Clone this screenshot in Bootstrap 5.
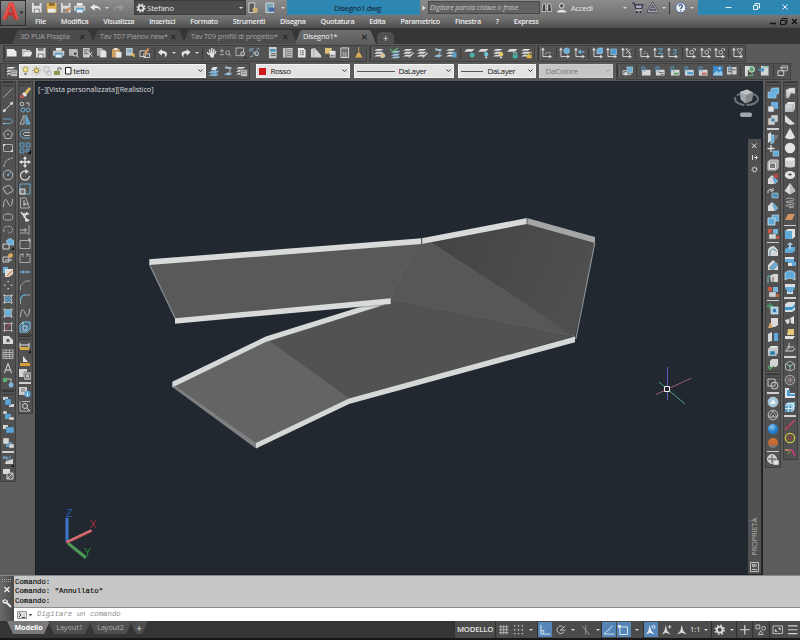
<!DOCTYPE html>
<html lang="it">
<head>
    <meta charset="UTF-8">
    <meta name="viewport" content="width=device-width, initial-scale=1.0">
    <title>Disegno1.dwg</title>
    <link rel="stylesheet" href="https://cdn.jsdelivr.net/npm/bootstrap@5.3.0/dist/css/bootstrap.min.css">
    <style>
        body { width: 800px; height: 640px; overflow: hidden; background: #5c5c5c; color: #e4e4e4; font: 7.5px/1 "Open Sans", "Noto Sans", sans-serif; }
        svg { display: block; flex: none; }
        .cell { width: 14.35px; height: 14px; display: flex; align-items: center; justify-content: center; flex: none; }
        .cell svg, .gear-ico { width: 11.5px; height: 11.5px; fill: none; stroke: #d9d9d9; }
        .cell svg { opacity: .93; }
        .gear-ico { width: 10px; height: 10px; margin: 0 1px; }
        .arr { width: 8px; flex: none; display: flex; justify-content: center; }
        .arr::after { content: ""; border: 2px solid transparent; border-top: 2.6px solid #d8d8d8; border-bottom: 0; }
        .arr.off::after { border-top-color: #888; }

        /* title bar */
        .app-logo { width: 26px; height: 26px; background: linear-gradient(#8b8b8b, #585858); border: 1px solid #2e2e2e; }
        .title-row { height: 15px; background: linear-gradient(#8c8c8c, #747474); }
        .ws-box { width: 112px; height: 15px; background: #4b4b4b; border: 1px solid #3c3c3c; font-size: 8px; letter-spacing: -.25px; }
        .win-blue { background: #2e87b3; height: 15px; }
        .doc-title { width: 133px; color: #10222c; font-size: 8px; letter-spacing: -.45px; }
        .login-name { width: 52px; font-size: 8px; letter-spacing: -.35px; }
        .search-box { width: 112px; height: 13px; background: #626262; border: 1px solid #4a4a4a; color: #c6c6c6; font-style: italic; font-size: 7px; letter-spacing: -.1px; padding-left: 1px; }
        .menu-row { height: 13px; background: linear-gradient(#787878, #6a6a6a 40%, #4c4c4c); padding-left: 9px; font-weight: 600; font-size: 7.2px; letter-spacing: -.29px; color: #ececec; }
        .menu-row span.mi { margin-right: 15px; }

        /* document tabs */
        .tab-row { height: 16px; background: #363636; padding-left: 12px; }
        .doc-tab { height: 14px; background: #4b4b4b; color: #a3a3a3; font-size: 7.4px; letter-spacing: -.2px; white-space: nowrap; padding: 0 8px; clip-path: polygon(0 100%, 5px 10%, 7px 0, calc(100% - 7px) 0, calc(100% - 5px) 10%, 100% 100%); margin-right: -2px; flex: none; }
        .doc-tab.on { background: linear-gradient(#6f6f6f, #5d5d5d); color: #f2f2f2; }
        .doc-tab b { color: #292929; font-size: 8px; font-weight: 600; }
        .plus-tab { width: 17px; height: 12px; background: #505050; border-radius: 5px 5px 2px 2px; font-size: 10px; color: #ddd; margin-left: 3px; }

        /* toolbars */
        .bar-row { height: 18px; background: #5a5a5a; }
        .bar-top { padding-left: 3px; }
        .tbar { height: 17px; background: #525252; border: 1px solid #404040; display: flex; align-items: center; }
        .bar-top .tbar + .tbar { margin-left: 1.5px; }
        .grip { width: 3px; height: 12px; border-left: 1px solid #393939; border-right: 1px solid #6b6b6b; flex: none; }
        .bsep { width: 1px; height: 12px; background: #3b3b3b; margin: 0 1.4px; flex: none; }
        .combo { height: 14px; background: #e3e3e3; color: #1c1c1c; font-size: 8px; letter-spacing: -.4px; flex: none; display: flex; align-items: center; border: 1px solid #f3f3f3; }
        .combo .chev { width: 5px; height: 4px; margin: 0 2px 0 auto; }
        .combo.off { background: #c6c6c6; color: #777; border-color: #cfcfcf; letter-spacing: -.25px; }

        /* side docks */
        .dock { padding-top: 1px; }
        .vbar { width: 15.5px; background: #515151; border: 1px solid #3f3f3f; margin-bottom: .4px; display: flex; flex-direction: column; align-items: center; }
        .vbar .cell { width: 14px; height: 13.75px; }
        .vbar .cell svg { width: 12px; height: 12px; }
        .vbar .grip { width: 12px; height: 4px; border: 0; border-top: 1px solid #343434; border-bottom: 1px solid #3c3c3c; }
        .vbar .bsep { width: 12px; height: 1.5px; background: #cfcfcf; margin: 1.2px 0; }
        .vbar.tight .bsep { margin: .95px 0; }

        /* drawing area */
        .work { height: 495px; }
        .canvas { margin: 2px 1px 1px 1px; background: #212830; outline: 1px solid #1c1f23; }
        .vp-label { left: 2px; top: 4px; font-size: 7.3px; color: #dcdcdc; letter-spacing: -.07px; }
        .prop-bar { right: 1px; top: 57px; bottom: 0; width: 13px; background: #515151; }
        .prop-bar .vtxt { writing-mode: vertical-rl; transform: rotate(180deg); font-size: 7.4px; color: #b5b5b5; margin-bottom: 5px; letter-spacing: -.1px; }

        /* command line */
        .cmd { height: 46px; font-family: "Liberation Mono", monospace; font-size: 7.35px; border-top: 1px solid #8a8a8a; }
        .cmd-side { width: 14px; background: linear-gradient(90deg, #6a6a6a, #4a4a4a); }
        .cmd-log { height: 31px; background: #c7c7c7; color: #161616; padding: 2px 1px; line-height: 9.3px; white-space: pre; -webkit-text-stroke: .2px #161616; }
        .cmd-in { height: 14px; background: #fff; color: #8f8f8f; border-top: 1px solid #8c8c8c; font-style: italic; }

        /* status bar */
        .status { height: 19px; background: #353535; border-bottom: 2px solid #161616; }
        .lay-tab { height: 13px; width: 43px; margin-right: -2px; background: #4e4e4e; color: #b0b0b0; font-size: 7.2px; clip-path: polygon(0 0, 100% 0, calc(100% - 6px) 100%, 6px 100%); }
        .lay-tab.on { background: #7a7a7a; color: #fff; font-weight: 700; letter-spacing: -.1px; }
        .st-group { height: 17px; background: #4b4b4b; border-left: 1px solid #2f2f2f; }
        .st-group .cell { width: 15px; height: 15px; }
        .st-group .cell.hot { background: #5685b8; width: 14px; margin-right: 1px; }
        .st-group .arr { width: 10px; }
        .st-model { width: 41px; font-size: 7.8px; font-weight: 600; letter-spacing: -.25px; }
    </style>
</head>
<body>

<!-- icon set, 12x12 grid -->
<svg width="0" height="0" class="position-absolute">
    <defs>
        <linearGradient id="gl" x1="0" y1="0" x2="0" y2="1"><stop offset="0" stop-color="#f4f4f4"/><stop offset="1" stop-color="#b9c0c4"/></linearGradient>
        <radialGradient id="gb" cx=".4" cy=".3"><stop offset="0" stop-color="#8fd4ff"/><stop offset="1" stop-color="#1d7fd0"/></radialGradient>
        <linearGradient id="go" x1="0" y1="0" x2="0" y2="1"><stop offset="0" stop-color="#e07a34"/><stop offset=".6" stop-color="#c8682c"/><stop offset="1" stop-color="#5f86a8"/></linearGradient>
    </defs>
    <g>
        <symbol id="new" viewBox="0 0 12 12"><path d="M1 2h7l3 3v5H1z" fill="#f5f5f5" stroke="none"/></symbol>
        <symbol id="open" viewBox="0 0 12 12"><path d="M1 10V2h4l1 1h4v2H4z" fill="#c9c9c9" stroke="none"/><path d="M4 5h8l-2 5H1z" fill="#f0f0f0" stroke="none"/></symbol>
        <symbol id="save" viewBox="0 0 12 12"><path d="M1 1h10v10H1z" fill="#e6e6e6" stroke="none"/><path d="M3 1h6v3H3zM3 7h6v4H3z" fill="#77797b" stroke="none"/><path d="M4 8h4v3H4z" fill="#f3f3f3" stroke="none"/></symbol>
        <symbol id="saveY" viewBox="0 0 12 12"><path d="M1 1h10v10H1z" fill="#e9b64d" stroke="none"/><path d="M3 1h6v3H3z" fill="#8a6a2a" stroke="none"/><path d="M2 7h8v4H2z" fill="#f3f3f3" stroke="none"/></symbol>
        <symbol id="saveAs" viewBox="0 0 12 12"><path d="M1 1h10v10H1z" fill="#e0e0e0" stroke="none"/><path d="M3 1h6v3H3zM3 7h6v4H3z" fill="#8c8c8c" stroke="none"/><path d="M5 10l5-5 1 2-4 4z" fill="#d68c50" stroke="none"/></symbol>
        <symbol id="print" viewBox="0 0 12 12"><path d="M3 1h6v3H3z" fill="#f5f5f5" stroke="none"/><path d="M0 4h12v5H0z" fill="#d2d2d2" stroke="none"/><path d="M2 6h8v5H2z" fill="#5fa9d4" stroke="none"/><path d="M3 8h6v3H3z" fill="#eef6fa" stroke="none"/></symbol>
        <symbol id="preview" viewBox="0 0 12 12"><path d="M1 2h9v7H1z" fill="#bdbdbd" stroke="none"/><circle cx="7.5" cy="7" r="2.5" fill="#666" stroke="#eee"/><path d="M9 9l2 2" stroke="#eee"/></symbol>
        <symbol id="cut" viewBox="0 0 12 12"><path d="M1 1h7v10H1z" fill="#d5d5d5" stroke="none"/><path d="M2 3h5M2 5h5M2 7h5" stroke="#666"/><path d="M5 4l6 6M11 5l-5 5" stroke="#f2f2f2"/></symbol>
        <symbol id="copy" viewBox="0 0 12 12"><path d="M1 1h5l2 2v6H1z" fill="#bfbfbf" stroke="none"/><path d="M4 3h5l2 2v6H4z" fill="#f0f0f0" stroke="#777" stroke-width=".6"/></symbol>
        <symbol id="paste" viewBox="0 0 12 12"><path d="M1 2h8v9H1z" fill="#d9a860" stroke="none"/><path d="M3 1h4v2H3z" fill="#eee" stroke="none"/><path d="M5 5h6v6H5z" fill="#f2f2f2" stroke="none"/></symbol>
        <symbol id="match" viewBox="0 0 12 12"><path d="M1 1h7v8H1z" fill="#cfd8dc" stroke="none"/><path d="M2 3h5M2 5h5" stroke="#4e9ac4"/><path d="M6 6l4 1v4L7 9z" fill="#e8c65c" stroke="none"/></symbol>
        <symbol id="blockEdit" viewBox="0 0 12 12"><path d="M1 4h6v6H1zM5 7h6v4H5z" stroke="#ddd"/><path d="M5 7l4-6 2 1-4 6z" fill="#e09a58" stroke="none"/></symbol>
        <symbol id="undo" viewBox="0 0 12 12"><path d="M5 2L1 5.5 5 9V7c3-.5 4 .5 3 4 4-3 3-7-3-7z" fill="#f0f0f0" stroke="none"/></symbol>
        <symbol id="redo" viewBox="0 0 12 12"><path d="M7 2l4 3.5L7 9V7C4 6.500 3 7.500 4 11 0 8 1 4 7 4z" fill="#f0f0f0" stroke="none"/></symbol>
        <symbol id="qundo" viewBox="0 0 12 12"><path d="M5 2L0 5.500 5 9V6.500c3-.5 5 .5 6 3 0-4-2-5.500-6-5.500z" fill="#f0f0f0" stroke="none"/></symbol>
        <symbol id="qredo" viewBox="0 0 12 12"><path d="M7 2l5 3.500L7 9V6.500C4 6 2 7 1 9.500 1 5.500 3 4 7 4z" fill="#999" stroke="none"/></symbol>
        <symbol id="hand" viewBox="0 0 12 12"><path d="M3.500 8L1 5.500M4.500 6L3.500 2.500M6 6V1M7.500 6l1-4M9 7l1.500-3" stroke="#eee" stroke-width="1.400"/><path d="M3 6h6l-1 5H5z" fill="#eee" stroke="none"/></symbol>
        <symbol id="zoomRt" viewBox="0 0 12 12"><path d="M0 4h4M2 2v4M0 8h4" stroke="#bbb"/><circle cx="8" cy="6" r="2" stroke="#bbb"/><path d="M9.500 7.500l2 2.500" stroke="#bbb"/></symbol>
        <symbol id="zoomWin" viewBox="0 0 12 12"><path d="M1 1h8v8H1z" stroke="#bbb"/><circle cx="8" cy="7" r="2" fill="#666" stroke="#ddd"/><path d="M9 12h3V9z" fill="#111" stroke="none"/></symbol>
        <symbol id="zoomPrev" viewBox="0 0 12 12"><path d="M1 2h4M1 2v3M11 2H8M1 10h3M2 3l7 6M9 3L3 9" stroke="#8db6cd"/><circle cx="8" cy="7" r="2" stroke="#ddd"/></symbol>
        <symbol id="props" viewBox="0 0 12 12"><path d="M2 0h8v12H2z" fill="#d9d9d9" stroke="none"/><path d="M3 2h6v3H3z" fill="#4b9bc9" stroke="none"/><path d="M4 7h5M4 9h5" stroke="#555"/></symbol>
        <symbol id="center" viewBox="0 0 12 12"><path d="M1 1h10v10H1z" fill="#cfcfcf" stroke="none"/><path d="M4 1v10M5 3h5M5 5h5M5 7h5M5 9h5" stroke="#666" stroke-width=".8"/></symbol>
        <symbol id="sheet" viewBox="0 0 12 12"><path d="M2 1h6l2 2v8H2z" fill="#f4f4f4" stroke="none"/><path d="M4 4h1M6 4h2M4 6h1M6 6h2M4 8h1M6 8h2" stroke="#444"/></symbol>
        <symbol id="books" viewBox="0 0 12 12"><path d="M1 2l4-1 7 8v2H1z" fill="#dcdcdc" stroke="none"/><path d="M4 2v9" stroke="#999" stroke-width=".6"/></symbol>
        <symbol id="markup" viewBox="0 0 12 12"><path d="M0 1h7v6H0z" fill="#e8c97a" stroke="none"/><path d="M5 4h6v7H5z" fill="#eee" stroke="none"/><path d="M6 8h2v2H6zM9 8h1v2H9z" fill="#555" stroke="none"/></symbol>
        <symbol id="calc" viewBox="0 0 12 12"><path d="M2 1h8v10H2z" stroke="#eee"/><path d="M3 3h6M3 5.500h6M3 7.500h6M3 9.500h6M5 5v6M7 5v6" stroke="#ddd" stroke-width=".6"/></symbol>
        <symbol id="broom" viewBox="0 0 12 12"><path d="M6 0v7" stroke="#cf9c55"/><path d="M5 6h2l3 5H2z" fill="#e4b253" stroke="none"/></symbol>
        <symbol id="layers" viewBox="0 0 12 12"><path d="M0 4l3-2h7L7 4zM0 7l3-2h7L7 7zM0 10l3-2h7l-3 2z" fill="#e8e8e8" stroke="none"/></symbol>
        <symbol id="layProp" viewBox="0 0 12 12"><use href="#layers"/><path d="M5 5h7v7H5z" fill="#ccc" stroke="#555" stroke-width=".6"/><path d="M6 7h5M6 9h5" stroke="#666" stroke-width=".7"/></symbol>
        <symbol id="layY" viewBox="0 0 12 12"><use href="#layers"/><circle cx="9" cy="9" r="2.200" fill="#eacb86"/></symbol>
        <symbol id="layG" viewBox="0 0 12 12"><path d="M2 6l3-2h7L9 6zM2 9l3-2h7L9 9zM2 12l3-2h7l-3 2z" fill="#a6d0e8" stroke="none"/><path d="M1 2l3 3 5-4" stroke="#61ba6a" stroke-width="1.200"/></symbol>
        <symbol id="layS" viewBox="0 0 12 12"><path d="M0 8l4-2h8l-4 3zM0 11l4-2h8l-4 3z" fill="#7fbbe0" stroke="none"/><path d="M3 5l2-3h5L8 6z" fill="#dcebf4" stroke="none"/></symbol>
        <symbol id="layW" viewBox="0 0 12 12"><use href="#layers"/><path d="M6 11l5-5" stroke="#c4d8e4" stroke-width="1.300"/></symbol>
        <symbol id="layB" viewBox="0 0 12 12"><use href="#layers"/><path d="M7 5l4 1v5H6z" fill="#5fa8d6" stroke="none"/></symbol>
        <symbol id="layBack" viewBox="0 0 12 12"><path d="M3 4l2-2h5v2zM2 10l3-2h6l-3 3z" fill="#8fc2e2" stroke="none"/><path d="M3 2c6 0 7 4 3 7" stroke="#ddd"/></symbol>
        <symbol id="lT" viewBox="0 0 12 12"><path d="M0 5l3-3h8L8 5z" fill="#e5e5e5" stroke="none"/><circle cx="8.500" cy="8.500" r="2.200" fill="#3fb5b0" stroke="#6cc" stroke-width=".7"/></symbol>
        <symbol id="lBulb" viewBox="0 0 12 12"><path d="M0 5l3-3h8L8 5z" fill="#e5e5e5" stroke="none"/><circle cx="8.500" cy="7.500" r="2.200" fill="#6ed0e0" stroke="none"/><path d="M7.500 10h2v2h-2z" fill="#eee" stroke="none"/></symbol>
        <symbol id="lBulbY" viewBox="0 0 12 12"><use href="#layers"/><circle cx="8.500" cy="7.500" r="2.200" fill="#f0d060" stroke="none"/><path d="M7.500 10h2v2h-2z" fill="#eee" stroke="none"/></symbol>
        <symbol id="lLock" viewBox="0 0 12 12"><path d="M0 5l3-3h8L8 5z" fill="#e5e5e5" stroke="none"/><path d="M6 8h5v4H6z" fill="#3fb5b0" stroke="none"/><path d="M7 8V6h3v2" stroke="#9dd"/></symbol>
        <symbol id="lLockY" viewBox="0 0 12 12"><use href="#layers"/><path d="M6 8h5v4H6z" fill="#e9bf45" stroke="none"/><path d="M8 8V6h3v1" stroke="#f0d680"/></symbol>
        <symbol id="axes" viewBox="0 0 12 12"><path d="M2 2v8h8" stroke="#e3e3e3"/><path d="M0 3.500L2 .5l2 3zM8.500 8l3 2-3 2z" fill="#e3e3e3" stroke="none"/></symbol>
        <symbol id="ucs" viewBox="0 0 12 12"><use href="#axes"/><path d="M4 8l3-3M8 6h2" stroke="#ddd" stroke-width=".9"/></symbol>
        <symbol id="ucsW" viewBox="0 0 12 12"><use href="#axes"/><circle cx="8" cy="4" r="3" fill="#69b6e4" stroke="#bde" stroke-width=".6"/></symbol>
        <symbol id="ucsP" viewBox="0 0 12 12"><use href="#axes"/><path d="M11 5H5m2-2L5 5l2 2" stroke="#6cb9e6" stroke-width="1.300"/></symbol>
        <symbol id="ucsF" viewBox="0 0 12 12"><use href="#axes"/><path d="M5 3l2-2h5v4L10 7H5z" fill="#69b6e4" stroke="#d7edf8" stroke-width=".5"/></symbol>
        <symbol id="ucsO" viewBox="0 0 12 12"><use href="#axes"/><path d="M5 2h6v6H5z" fill="#4ba3da" stroke="#d7edf8" stroke-width=".5"/></symbol>
        <symbol id="ucsV" viewBox="0 0 12 12"><use href="#axes"/><path d="M5 2l5 5M10 2L5 7M5 2h2M10 7H8" stroke="#ddd"/></symbol>
        <symbol id="ucs1" viewBox="0 0 12 12"><use href="#axes"/><path d="M5 7h1M8 7h1M6 5h1" stroke="#fff"/></symbol>
        <symbol id="ucsZ" viewBox="0 0 12 12"><use href="#axes"/><path d="M5 2h5L6 7h5" stroke="#69b6e4"/></symbol>
        <symbol id="ucs3" viewBox="0 0 12 12"><use href="#axes"/><path d="M6 3h4L8 5c3 0 2 3-2 2" stroke="#69b6e4"/></symbol>
        <symbol id="ucsR" viewBox="0 0 12 12"><use href="#axes"/><circle cx="7" cy="5.500" r="2" stroke="#ddd" stroke-width=".9"/><path d="M8 2h3v2" stroke="#ddd" stroke-width=".9"/></symbol>
        <symbol id="ucsA" viewBox="0 0 12 12"><use href="#axes"/><path d="M5 2l3 5 3-5M5 2h6M8 6l3 3" stroke="#ddd" stroke-width=".8"/></symbol>
        <symbol id="r1" viewBox="0 0 12 12"><path d="M1 6h8v4H1z" stroke="#ddd"/><path d="M5 2h6v6H6z" fill="#6fb3da" stroke="#cfe6f3" stroke-width=".6"/><circle cx="4" cy="9" r="1.500" fill="#eee"/></symbol>
        <symbol id="clip" viewBox="0 0 12 12"><path d="M2 5h9v6H2z" fill="#e2e2e2" stroke="none"/><path d="M2 8V2h3v5" stroke="#559fca"/></symbol>
        <symbol id="clipG" viewBox="0 0 12 12"><use href="#clip"/><path d="M5 8h5v2H5z" fill="#57a867" stroke="none"/></symbol>
        <symbol id="clipD" viewBox="0 0 12 12"><use href="#clip"/><path d="M5 8h5M7 10h3" stroke="#666"/></symbol>
        <symbol id="clipB" viewBox="0 0 12 12"><use href="#clip"/><path d="M4 7h7v3H4z" fill="#4e9ed2" stroke="#dff" stroke-width=".5"/></symbol>
        <symbol id="clipR" viewBox="0 0 12 12"><use href="#clip"/><path d="M5 8h5v2H5z" fill="#cf5c62" stroke="none"/></symbol>
        <symbol id="image" viewBox="0 0 12 12"><path d="M1 1h10v10H1z" fill="#3e8fd0" stroke="none"/><path d="M1 10l4-4 2 2 2-2 2 2v3H1z" fill="#9ed0f0" stroke="none"/><circle cx="8" cy="3.500" r="1" fill="#fff" stroke="none"/></symbol>
        <symbol id="book" viewBox="0 0 12 12"><path d="M1 2h10v8H1z" fill="#d8d8d8" stroke="none"/><path d="M6 2v9M2 5h3M7 5h3M2 7h3" stroke="#555"/><path d="M3 5V1h2v4" stroke="#4e9ac4"/></symbol>
        <symbol id="xrefG" viewBox="0 0 12 12"><path d="M1 1h5v4H4v7H1z" fill="#e6e6e6" stroke="none"/><circle cx="8" cy="4.500" r="3" fill="#68a878" stroke="#dfe"/><path d="M5 11h4v-2" stroke="#5bb070" stroke-width="1.500"/></symbol>
        <symbol id="importI" viewBox="0 0 12 12"><path d="M3 1h8v10H3z" fill="#dedede" stroke="none"/><path d="M0 5h6M4 3l2 2-2 2" stroke="#4697c8" stroke-width="1.400"/><path d="M5 2h6" stroke="#5ca"/></symbol>
        <symbol id="winds" viewBox="0 0 12 12"><path d="M5 1h6v5H5z" stroke="#bbb"/><path d="M3 3h7M1 6h6v5H1z" stroke="#ddd"/></symbol>
        <!-- draw -->
        <symbol id="line" viewBox="0 0 12 12"><path d="M1.500 10.500l9-9" stroke="#b8b8b8" stroke-width=".9"/></symbol>
        <symbol id="xline" viewBox="0 0 12 12"><path d="M1.500 10.500l9-9" stroke="#ccc"/><path d="M1 11l1-3 2 2zM11 1l-1 3-2-2z" fill="#eee" stroke="#eee" stroke-width=".5"/></symbol>
        <symbol id="pline" viewBox="0 0 12 12"><path d="M1 5h6c5 0 4 5 0 4.500H1" stroke="#6fa6c8"/><circle cx="2" cy="9.500" r=".8" fill="#ddd" stroke="none"/></symbol>
        <symbol id="poly" viewBox="0 0 12 12"><path d="M6 1.500l4.500 3.500-1.700 5.500H3.200L1.500 5z" stroke="#bbb"/><circle cx="6" cy="6.500" r=".8" fill="#ddd" stroke="none"/></symbol>
        <symbol id="rect" viewBox="0 0 12 12"><path d="M1.500 2.500h9v7h-9z" stroke="#b4b4b4"/><path d="M1 2h2v2H1zM9 8h2v2H9z" fill="#ddd" stroke="none"/></symbol>
        <symbol id="arc" viewBox="0 0 12 12"><path d="M2 11C2 6 5 3 10.500 2" stroke="#c4c4c4" stroke-dasharray="3 1"/></symbol>
        <symbol id="circ" viewBox="0 0 12 12"><circle cx="6" cy="6" r="4.800" stroke="#b8c4cc"/><path d="M6 6l3-3" stroke="#6cb0dc"/><circle cx="6" cy="6" r="1" fill="#8cc4ea" stroke="none"/></symbol>
        <symbol id="cloud" viewBox="0 0 12 12"><path d="M3 8C0 7 1 3 4 4c1-3 6-1 5 1 3 1 2 5-1 4-1 3-5 2-5-1z" stroke="#ccc"/></symbol>
        <symbol id="spl" viewBox="0 0 12 12"><path d="M1.500 10C2 1 4 1 6 6s4 4 4.500-4" stroke="#c0c8cc"/></symbol>
        <symbol id="ell" viewBox="0 0 12 12"><ellipse cx="6" cy="6" rx="4.800" ry="3.200" stroke="#b8b8b8"/></symbol>
        <symbol id="ellA" viewBox="0 0 12 12"><path d="M2 8C0 3 6 1 9 3s2 6-3 6" stroke="#bbb" stroke-dasharray="3 1"/><path d="M6 6v1" stroke="#6cb0dc"/></symbol>
        <symbol id="insB" viewBox="0 0 12 12"><path d="M1 6h6v5H1z" stroke="#ddd"/><path d="M4 3l4-3 4 3v4H7z" fill="#6db8e6" stroke="#cfe9f8" stroke-width=".5"/><path d="M9 12h3V9z" fill="#111" stroke="none"/></symbol>
        <symbol id="mkB" viewBox="0 0 12 12"><path d="M1 5h6v5H1zM3 8h7" stroke="#ddd"/><circle cx="8.500" cy="3.500" r="2.300" fill="#eab65c" stroke="none"/></symbol>
        <symbol id="palB" viewBox="0 0 12 12"><path d="M1 1h5v6H1z" fill="#6db8e6" stroke="none"/><path d="M3 3h8v5l-4 3H3z" fill="#e9e9e9" stroke="none"/><path d="M5 10l5-5" stroke="#e0914f" stroke-width="1.500"/></symbol>
        <symbol id="pts" viewBox="0 0 12 12"><path d="M5.500 2h1.300v1.300H5.500zM2 5.500h1.300v1.300H2zM9 5.500h1.300v1.300H9zM5.500 9h1.300v1.300H5.500z" fill="#eee" stroke="none"/></symbol>
        <symbol id="frame4" viewBox="0 0 12 12"><path d="M2.500 1v10M9.500 1v10M1 2.500h10M1 9.500h10" stroke="#bdbdbd" stroke-width=".9"/></symbol>
        <symbol id="hatch" viewBox="0 0 12 12"><path d="M3 3h6v6H3z" fill="#4880a6" stroke="none"/><path d="M3 6l3-3M3 9l6-6M6 9l3-3" stroke="#9fc4dc" stroke-width=".7"/><use href="#frame4"/></symbol>
        <symbol id="grad" viewBox="0 0 12 12"><path d="M3 3h6v6H3z" fill="#6db8e6" stroke="none"/><use href="#frame4"/></symbol>
        <symbol id="bound" viewBox="0 0 12 12"><path d="M3 9l6-6M3 3h5" stroke="#b8494f"/><use href="#frame4"/></symbol>
        <symbol id="region" viewBox="0 0 12 12"><path d="M1 2h6l4 4v4H1z" fill="#e4e4e4" stroke="none"/><circle cx="6" cy="6.500" r="1.700" fill="#555" stroke="none"/></symbol>
        <symbol id="table" viewBox="0 0 12 12"><path d="M1 2h10v8.500H1zM1 4.500h10M1 6.500h10M1 8.500h10M4 2v8M7.500 2v8" stroke="#ccc" stroke-width=".8"/></symbol>
        <symbol id="txtA" viewBox="0 0 12 12"><path d="M2.500 11L6 1.500 9.500 11M4 8h4" stroke="#eee"/></symbol>
        <symbol id="addSel" viewBox="0 0 12 12"><path d="M3 3h6v5" stroke="#ccc"/><circle cx="3" cy="4" r="2.200" fill="#59c274" stroke="none"/><circle cx="9" cy="9" r="2.400" fill="#86c4ea" stroke="none"/></symbol>
        <symbol id="ord1" viewBox="0 0 12 12"><path d="M1 1h5v3H1zM7 8h5v3H7z" fill="#ddd" stroke="none"/><path d="M3 3h6v6H3z" fill="#5cabe0" stroke="#456" stroke-width=".4"/></symbol>
        <symbol id="ord2" viewBox="0 0 12 12"><path d="M3 4h6v5H3z" fill="#5cabe0" stroke="none"/><path d="M1 1h4v3H1zM7 7h5v3H7z" fill="#e2e2e2" stroke="#555" stroke-width=".4"/></symbol>
        <symbol id="ord3" viewBox="0 0 12 12"><path d="M1 2h5v4H1z" fill="#e2e2e2" stroke="none"/><path d="M4 4h8v6H4z" fill="#5cabe0" stroke="#456" stroke-width=".4"/></symbol>
        <symbol id="ord4" viewBox="0 0 12 12"><path d="M4 5h6v5H4z" fill="#5cabe0" stroke="none"/><path d="M1 1h6v6H1zM7 7h5v4H7z" fill="#e2e2e2" stroke="#555" stroke-width=".4"/></symbol>
        <symbol id="abc" viewBox="0 0 12 12"><path d="M1 4l1-3 1 3M4 1v3h2V2.500H4M9 1.500c-2-1-2 3 0 2" stroke="#79bde8" stroke-width=".8"/><path d="M4 6l7-2v5H3z" fill="#ddd" stroke="none"/><path d="M9 12h3V9z" fill="#111" stroke="none"/></symbol>
        <symbol id="hback" viewBox="0 0 12 12"><path d="M1 1h7v5H1z" fill="#e4e4e4" stroke="none"/><path d="M5 5h6v6H5zM5 11l6-6" stroke="#ddd" fill="#666"/></symbol>
        <!-- modify -->
        <symbol id="erase" viewBox="0 0 12 12"><path d="M5 6l5-6 2 2-5 6z" fill="#efc768" stroke="none"/><path d="M3 7l2-2 3 3-2 2z" fill="#eee" stroke="none"/><path d="M0 11h4l2-1-3-3z" fill="#c75b52" stroke="none"/></symbol>
        <symbol id="cpy" viewBox="0 0 12 12"><circle cx="3" cy="3" r="1.800" stroke="#c9c9c9"/><circle cx="4" cy="9" r="2" stroke="#6cb0dc"/><circle cx="9" cy="9" r="2" stroke="#6cb0dc"/><path d="M7 2h3v3" stroke="#ccc"/></symbol>
        <symbol id="mirr" viewBox="0 0 12 12"><path d="M5 1v9H1z" stroke="#bbb"/><path d="M7 1v9h4z" fill="#4f9bcb" stroke="#79b9e0"/></symbol>
        <symbol id="offs" viewBox="0 0 12 12"><path d="M11 2H5c-5 0-5 8 0 8h6" stroke="#6cb0dc"/><path d="M11 4.500H6c-2 0-2 3 0 3h5" stroke="#ccc"/></symbol>
        <symbol id="array" viewBox="0 0 12 12"><path d="M1 1h4v4H1zM7 1h4v4H7zM1 7h4v4H1zM7 7h3v3H7z" stroke="#6aa8cf" fill="#4a6578" stroke-width=".8"/><path d="M8 12h4V8z" fill="#0b0b0b" stroke="none"/></symbol>
        <symbol id="move" viewBox="0 0 12 12"><path d="M6 2v8M2 6h8" stroke="#f0f0f0" stroke-width="1.300"/><path d="M6 0l2 3H4zM6 12l2-3H4zM0 6l3-2v4zM12 6L9 4v4z" fill="#f0f0f0" stroke="none"/></symbol>
        <symbol id="rot" viewBox="0 0 12 12"><path d="M8 2.500A4.500 4.500 0 1 0 10.500 7" stroke="#e4e4e4" stroke-width="1.200"/><path d="M6 0l4 2.500L6.500 5z" fill="#e4e4e4" stroke="none"/></symbol>
        <symbol id="scale" viewBox="0 0 12 12"><path d="M1 1h10v10H1z" stroke="#6cb0dc"/><path d="M1 6h5v5H1z" fill="#777" stroke="#eee"/></symbol>
        <symbol id="strch" viewBox="0 0 12 12"><path d="M1.500 1v10h9L7 1z" stroke="#b4b4b4"/><path d="M5 3v6M5 7h4" stroke="#ddd"/></symbol>
        <symbol id="trim" viewBox="0 0 12 12"><path d="M2 1l6 8M8 1L5 7M3 3h7" stroke="#e8e8e8" stroke-width="1.400"/><path d="M6 7l5 2-3 2-2-1z" fill="#eee" stroke="none"/></symbol>
        <symbol id="ext" viewBox="0 0 12 12"><path d="M10 1v10M1 9h8" stroke="#b4b4b4"/><path d="M1 6h6M5.500 4.500L7.500 6l-2 1.500" stroke="#ccc"/></symbol>
        <symbol id="brk1" viewBox="0 0 12 12"><path d="M1 2.500h10v8H1z" stroke="#b0b0b0"/><path d="M9 1h2v3" stroke="#ddd"/></symbol>
        <symbol id="brk2" viewBox="0 0 12 12"><path d="M4 2.500H1v8h10v-8H8M4 1v4M8 1v4" stroke="#b0b0b0"/></symbol>
        <symbol id="join" viewBox="0 0 12 12"><path d="M1 6h4M7 6h4" stroke="#6cb0dc" stroke-width="1.300"/><path d="M4 4l2 2-2 2zM8 4L6 6l2 2z" fill="#6cb0dc" stroke="none"/></symbol>
        <symbol id="cham" viewBox="0 0 12 12"><path d="M1.500 11V7l5-5H11" stroke="#a8a8a8"/></symbol>
        <symbol id="fil" viewBox="0 0 12 12"><path d="M1.500 11V7c0-3 2-5 5-5H11" stroke="#a8a8a8"/><path d="M1.500 7c0-3 2-5 5-5" stroke="#5aa8dc" stroke-width="1.300"/></symbol>
        <symbol id="expl" viewBox="0 0 12 12"><path d="M1 4l3-3h7v7l-3 3H1z" fill="#44718e" stroke="#8cc6ea"/><path d="M4 5h4v4H4zM4 1v3" stroke="#cfe7f5"/></symbol>
        <symbol id="dimB" viewBox="0 0 12 12"><path d="M1 2v5M10 2v5M1 4h9" stroke="#eee"/><path d="M1 6h9v3H1z" fill="#e2b347" stroke="none"/><path d="M9 12h3V9z" fill="#111" stroke="none"/></symbol>
        <symbol id="dimA" viewBox="0 0 12 12"><path d="M4 1l5 6H4z" fill="#f0f0f0" stroke="none"/><path d="M1 8h10v3H1z" fill="#e2a52f" stroke="none"/></symbol>
        <symbol id="pages" viewBox="0 0 12 12"><path d="M0 1h8v8H0z" fill="#e0e0e0" stroke="none"/><path d="M5 4h7v8H5z" fill="#ccc" stroke="#555" stroke-width=".6"/><path d="M6.500 6h4v4h-4z" stroke="#555" stroke-width=".8"/></symbol>
        <symbol id="pageI" viewBox="0 0 12 12"><path d="M0 1h8v8H0z" fill="#d6d6d6" stroke="none"/><path d="M2 3h4M2 5h4" stroke="#777"/><circle cx="8.500" cy="8" r="3.200" fill="#62b0e4" stroke="none"/><path d="M8.500 7v3" stroke="#fff"/></symbol>
        <symbol id="insp" viewBox="0 0 12 12"><path d="M1 1v10h10M3 1.500h8" stroke="#bbb"/><circle cx="6" cy="6" r="2.500" stroke="#ddd"/><path d="M8 8l3 3" stroke="#ddd"/></symbol>
        <!-- solids -->
        <symbol id="box" viewBox="0 0 12 12"><path d="M1 4l3-3h7v7l-2 3H1z" fill="url(#gl)" stroke="none"/><path d="M1 4h8v7M9 4l2-3" stroke="#999" stroke-width=".5"/></symbol>
        <symbol id="union" viewBox="0 0 12 12"><path d="M1 5h3V2l2-1h6v5L9 8v3H1z" fill="#6cb9ec" stroke="#d5edfa" stroke-width=".5"/></symbol>
        <symbol id="subt" viewBox="0 0 12 12"><path d="M4 1h7v7H4z" fill="#6cb9ec" stroke="none"/><path d="M1 5h6v6H1z" fill="#eee" stroke="#556" stroke-width=".6"/></symbol>
        <symbol id="inter" viewBox="0 0 12 12"><path d="M4 1h7v7H4zM1 4h7v7H1z" fill="#ddd" stroke="#666" stroke-width=".6"/><path d="M4 4h4v4H4z" fill="#4586b0" stroke="#fff" stroke-width=".7"/></symbol>
        <symbol id="extF" viewBox="0 0 12 12"><path d="M1 2l3-2v9l-3 2z" fill="#e6e6e6" stroke="none"/><path d="M4 3h3v7l-3 2zM8 4h3M8 6h2" fill="#62b0e4" stroke="#bfe1f5" stroke-width=".7"/></symbol>
        <symbol id="movF" viewBox="0 0 12 12"><path d="M4 0v7M.5 3.500h7" stroke="#eee" stroke-width="1.300"/><path d="M6 6h6v5H6z" fill="#62b0e4" stroke="#d5edfa" stroke-width=".5"/></symbol>
        <symbol id="offF" viewBox="0 0 12 12"><path d="M1 3l2-2h8v8l-2 2H1z" fill="#aaa" stroke="#ddd"/><path d="M2.500 4h6v5.500h-6z" fill="#7c7c7c" stroke="#eee"/></symbol>
        <symbol id="slice" viewBox="0 0 12 12"><path d="M1 11V6l4-4 2 2v7z" fill="#e6e6e6" stroke="none"/><path d="M6 3l5 5-3 3-3-6z" fill="#62b0e4" stroke="#ddd" stroke-width=".5"/></symbol>
        <symbol id="delF" viewBox="0 0 12 12"><use href="#slice"/><path d="M7 1l4 4M11 1L7 5" stroke="#e0484a" stroke-width="1.300"/></symbol>
        <symbol id="rotF" viewBox="0 0 12 12"><path d="M1 6C0 2 5 1 6 4M6 1v3H3" stroke="#ddd"/><path d="M5 6h6v5H5z" fill="#4e96c0" stroke="#cde" stroke-width=".6"/></symbol>
        <symbol id="cpF" viewBox="0 0 12 12"><path d="M5 1h7v6H5z" fill="#62b0e4" stroke="#e4f4fd" stroke-width=".6"/><path d="M1 4h7v7H1z" fill="#62b0e4" stroke="#e4f4fd" stroke-width=".8"/></symbol>
        <symbol id="colF" viewBox="0 0 12 12"><path d="M1 1h4v4H1zM8 8h4v3H8z" fill="#d2593f" stroke="none"/><path d="M6 1h5v5H6z" fill="#7bbde8" stroke="none"/><path d="M2 6h7v5H2z" fill="#ddd" stroke="#777" stroke-width=".5"/></symbol>
        <symbol id="filE" viewBox="0 0 12 12"><path d="M1 11V6c0-4 4-5 6-5l4 4v6z" fill="#e3e3e3" stroke="none"/><path d="M3 11V7c0-2 2-3 4-3l3 3" stroke="#4b8fb8"/></symbol>
        <symbol id="chaE" viewBox="0 0 12 12"><path d="M1 11V6l5-5 5 4v6z" fill="#e3e3e3" stroke="none"/><path d="M2 9l6-6 3 3-5 5z" fill="#6cb4e2" stroke="#777" stroke-width=".5"/></symbol>
        <symbol id="impr" viewBox="0 0 12 12"><path d="M3 4l3-2h5v8H4z" fill="#dedede" stroke="none"/><path d="M1 11V4h3" stroke="#7cc"/><path d="M6 5v5" stroke="#666"/></symbol>
        <symbol id="clean" viewBox="0 0 12 12"><path d="M3 0v6M0 3h6" stroke="#3fae6a" stroke-width="1.300"/><path d="M4 4h7v7H4z" fill="#9fd0ee" stroke="#fff" stroke-width=".7"/><path d="M6 6h3v3H6z" fill="#3a7fae" stroke="none"/></symbol>
        <symbol id="brush" viewBox="0 0 12 12"><path d="M4 1h7v7l-3 2H4z" fill="#e6e6e6" stroke="none"/><path d="M1 11l2-6 3 6z" fill="#d9a868" stroke="none"/></symbol>
        <symbol id="sep3" viewBox="0 0 12 12"><path d="M1 3l4-2v9l-4 1z" fill="#e6e6e6" stroke="none"/><path d="M7 2h4v8H7z" fill="#62b0e4" stroke="none"/></symbol>
        <symbol id="shell" viewBox="0 0 12 12"><use href="#box"/><path d="M3 6h5v4H3z" fill="#2e7bad" stroke="#9cd" stroke-width=".6"/></symbol>
        <symbol id="chk" viewBox="0 0 12 12"><path d="M3 3l2-2h6v6L9 9H3z" fill="#ddd" stroke="none"/><path d="M1 8l2 3 4-3" stroke="#58b068" stroke-width="1.400"/></symbol>
        <symbol id="vs" viewBox="0 0 12 12"><path d="M1 1h7v7H1z" stroke="#ccc"/><circle cx="7.500" cy="7.500" r="3.500" stroke="#ddd"/></symbol>
        <symbol id="sphW" viewBox="0 0 12 12"><circle cx="6" cy="6" r="5" fill="#a8d0e6" stroke="#dce9f0" stroke-width=".6"/><path d="M6 3l3 5H3z" fill="#fff" stroke="none"/></symbol>
        <symbol id="sphL" viewBox="0 0 12 12"><circle cx="6" cy="6" r="4.800" stroke="#ccc"/><path d="M6 2l4 6H2zM4 9l2-3 2 3" stroke="#ccc" stroke-width=".8"/></symbol>
        <symbol id="sphB" viewBox="0 0 12 12"><circle cx="6" cy="6" r="5.200" fill="url(#gb)" stroke="none"/></symbol>
        <symbol id="sphO" viewBox="0 0 12 12"><circle cx="6" cy="6" r="5" fill="url(#go)" stroke="none"/></symbol>
        <symbol id="vsM" viewBox="0 0 12 12"><circle cx="5" cy="5" r="4.500" fill="#ddd"/><path d="M5 1v8M1 5h8" stroke="#555"/><path d="M6 6h6v5H6z" fill="#eee" stroke="#555" stroke-width=".5"/></symbol>
        <symbol id="psol" viewBox="0 0 12 12"><path d="M2 3l4-2h5v6l-4-1-2 5H2z" fill="url(#gl)" stroke="#999" stroke-width=".4"/></symbol>
        <symbol id="wedge" viewBox="0 0 12 12"><path d="M1 1l10 9-5 1-5-3z" fill="#e9e9e9" stroke="none"/></symbol>
        <symbol id="cone" viewBox="0 0 12 12"><path d="M6 0l5 9c-1 3-9 3-10 0z" fill="#ececec" stroke="none"/></symbol>
        <symbol id="sph" viewBox="0 0 12 12"><circle cx="6" cy="6" r="5.200" fill="#f0f0f0" stroke="none"/></symbol>
        <symbol id="cyl" viewBox="0 0 12 12"><path d="M1 3v7c1 2 9 2 10 0V3z" fill="#dcdcdc" stroke="none"/><ellipse cx="6" cy="3" rx="5" ry="1.800" fill="#fafafa" stroke="none"/></symbol>
        <symbol id="torus" viewBox="0 0 12 12"><ellipse cx="6" cy="6" rx="5.200" ry="4" fill="#eee" stroke="none"/><ellipse cx="6" cy="5.500" rx="1.800" ry="1.100" fill="#4a4a4a" stroke="none"/></symbol>
        <symbol id="pyr" viewBox="0 0 12 12"><path d="M6 0l5.500 8L6 11.500.5 8z" fill="#e6e6e6" stroke="none"/><path d="M6 0v11l5.500-3z" fill="#c4c4c4" stroke="none"/></symbol>
        <symbol id="helix" viewBox="0 0 12 12"><path d="M2 2c3-2 9 0 8 1s-8 1-8 2 8 0 8 1.500-8 .5-8 2 8 0 8 1-3 1.500-5 1" stroke="#bcbcbc" stroke-width=".9"/></symbol>
        <symbol id="plane" viewBox="0 0 12 12"><path d="M4 3h7L8 9H1z" fill="#d99a66" stroke="none"/></symbol>
        <symbol id="extr" viewBox="0 0 12 12"><path d="M1 3l3-2h7v8l-3 2H1z" fill="#eee" stroke="none"/><path d="M1 3h7v8H1z" fill="#62b0e4" stroke="none"/></symbol>
        <symbol id="ppull" viewBox="0 0 12 12"><path d="M1 7l3-2h7v4l-3 2H1z" fill="#62b0e4" stroke="none"/><path d="M6 0l3 3H7v4H5V3H3z" fill="#a8d6f2" stroke="none"/></symbol>
        <symbol id="sweep" viewBox="0 0 12 12"><path d="M1 1h9v5h2v4H4V6H1z" fill="#62b0e4" stroke="none"/><path d="M1 1h9v2H1zM4 7h4v3H4z" fill="#eee" stroke="none"/></symbol>
        <symbol id="revo" viewBox="0 0 12 12"><path d="M1 3c3-3 7-3 10 0v7c-3-2-7-2-10 0z" fill="#62b0e4" stroke="#d5edfa" stroke-width=".7"/></symbol>
        <symbol id="loft" viewBox="0 0 12 12"><path d="M1 1h10v3L9 7v4H3V7L1 4z" fill="#e2e8ec" stroke="none"/><path d="M1 4h10L9 8c-2 2-4 2-6 0z" fill="#62b0e4" stroke="none"/></symbol>
        <symbol id="sect" viewBox="0 0 12 12"><path d="M1 3l3-2h7v8l-3 2H1z" fill="#dfe9ef" stroke="none"/><path d="M1 6h7l3-3v3L8 9H1z" fill="#3f9ad6" stroke="none"/></symbol>
        <symbol id="horn" viewBox="0 0 12 12"><path d="M1 5l4-1 5-3v8L6 8 3 9z" fill="#ececec" stroke="none"/><path d="M6 4v5" stroke="#222"/></symbol>
        <symbol id="flat" viewBox="0 0 12 12"><path d="M4 1h6v6H3z" fill="#f0d27a" stroke="none"/><path d="M1 8h10l-2 3H1z" fill="#ececec" stroke="none"/></symbol>
        <symbol id="flat2" viewBox="0 0 12 12"><path d="M5 1v6M3 5h7M1 9h8l2-3M3 6v3" stroke="#d8d8d8"/></symbol>
        <symbol id="orb" viewBox="0 0 12 12"><path d="M6 1l4.500 3v5L6 11 1.500 9V4zM6 6v5M6 6L2 4M6 6l4-2" stroke="#b5bfc2"/><circle cx="6" cy="6" r="1.400" fill="#69b58c" stroke="none"/></symbol>
        <symbol id="orb2" viewBox="0 0 12 12"><circle cx="6" cy="6" r="4.800" stroke="#a9b5ae"/><path d="M2 2l8 8M10 2l-8 8M6 1v10M1 6h10" stroke="#a99" stroke-width=".8"/></symbol>
        <symbol id="lshape" viewBox="0 0 12 12"><path d="M1 1h4v5h6v5H1z" fill="#eaf3f8" stroke="none"/><path d="M3 3h3v4h5v2H3z" fill="#4ea2d8" stroke="none"/></symbol>
        <symbol id="mesh" viewBox="0 0 12 12"><path d="M1 4l3-3h7v7l-3 3H1z" fill="#5aa8d8" stroke="none"/><path d="M1 4h7v7M8 4l3-3M4.500 4v7M1 7.500h7l3-3M2.500 2.500h7V9.500" stroke="#f0f8fc" stroke-width=".9"/></symbol>
        <symbol id="redL" viewBox="0 0 12 12"><path d="M1 11L11 1" stroke="#d84a62" stroke-width="1.200"/><path d="M4 5v3h3" stroke="#8c3a4a"/></symbol>
        <symbol id="yelC" viewBox="0 0 12 12"><circle cx="6" cy="6" r="4.600" stroke="#d4cf3c" stroke-width="1.300"/><circle cx="6" cy="6" r="2" stroke="#b5443c"/></symbol>
        <symbol id="mag" viewBox="0 0 12 12"><path d="M1 4h7l3 6" stroke="#e0307e" stroke-width="1.500"/><path d="M1 4h4" stroke="#b5b04a" stroke-width="1.300"/><path d="M7 4l-3 4" stroke="#8a3"/></symbol>
        <!-- title and status -->
        <symbol id="gear" viewBox="0 0 12 12"><circle cx="6" cy="6" r="3" stroke="#e6e6e6" stroke-width="2"/><circle cx="6" cy="6" r="4.700" stroke="#e6e6e6" stroke-width="1.600" stroke-dasharray="1.850 1.850"/></symbol>
        <symbol id="phone" viewBox="0 0 12 12"><path d="M2 1h6v10H2z" fill="#555" stroke="#ddd"/><path d="M6 6h5v5H6z" fill="#d8b878" stroke="none"/></symbol>
        <symbol id="phone2" viewBox="0 0 12 12"><path d="M2 1h8v10H2z" fill="#7ab" stroke="#ddd"/><path d="M5 6h6v4H5z" fill="#46a" stroke="none"/></symbol>
        <symbol id="binoc" viewBox="0 0 12 12"><path d="M1 10l1-8h3v8zM7 10V2h3l1 8zM5 4h2v3H5z" fill="#34363a" stroke="#e2e2e2" stroke-width=".8"/></symbol>
        <symbol id="user" viewBox="0 0 12 12"><circle cx="6" cy="4" r="2.500" fill="#555" stroke="#eee"/><path d="M1 11c0-4 10-4 10 0z" fill="#eee" stroke="none"/></symbol>
        <symbol id="cart" viewBox="0 0 12 12"><path d="M0 1h2l2 6h6l1.500-4H3" stroke="#26283e" stroke-width="1.200" fill="#aab"/><path d="M4 8.500h6" stroke="#eee"/><circle cx="5" cy="10.500" r="1" fill="#224" stroke="none"/><circle cx="9" cy="10.500" r="1" fill="#224" stroke="none"/></symbol>
        <symbol id="exch" viewBox="0 0 12 12"><path d="M6 1l5 9H1zM4 7h4" stroke="#262a46" stroke-width="2"/><path d="M6 1l5 9H1zM4 7h4" stroke="#e5e5e5" stroke-width=".8"/></symbol>
        <symbol id="help" viewBox="0 0 12 12"><circle cx="6" cy="6" r="5.300" fill="#f2f5fa" stroke="#41659b"/><path d="M4.300 4.500c0-2.500 3.600-2.200 3.400 0C7.600 5.800 6 5.700 6 7.300M6 8.500v1.300" stroke="#27477c" stroke-width="1.300"/></symbol>
        <symbol id="grid" viewBox="0 0 12 12"><path d="M3 1v10M6 1v10M9 1v10M1 3h10M1 6h10M1 9h10" stroke="#d5d5d5" stroke-width=".8"/></symbol>
        <symbol id="snap" viewBox="0 0 12 12"><path d="M1 2h10M1 6h10M1 10h10" stroke="#cfcfcf" stroke-width="1.400" stroke-dasharray="1.500 2.500"/></symbol>
        <symbol id="ortho" viewBox="0 0 12 12"><path d="M2 1v9.500h10M2 7h3v3" stroke="#e8f1f8"/></symbol>
        <symbol id="polar" viewBox="0 0 12 12"><path d="M8 2.500A4 4 0 1 0 9.500 8M5.500 6.500L11 2M5.500 6.500H11" stroke="#ccc"/></symbol>
        <symbol id="iso" viewBox="0 0 12 12"><path d="M6 1v10M2 2l8 9" stroke="#aaa" stroke-width=".9"/></symbol>
        <symbol id="otrack" viewBox="0 0 12 12"><path d="M1 10.500h11M1 10.500L10 2" stroke="#e8f1f8"/><path d="M6 6l1 1" stroke="#cde"/></symbol>
        <symbol id="osnap" viewBox="0 0 12 12"><path d="M2 3h8v8H2z" stroke="#e8f1f8"/><path d="M0 1h3v3H0z" fill="#e8f1f8" stroke="none"/></symbol>
        <symbol id="ann" viewBox="0 0 12 12"><path d="M6 1l1.500 6L11 11 6 9l-5 2 3.500-4z" fill="#e6e6e6" stroke="none"/></symbol>
        <symbol id="annS" viewBox="0 0 12 12"><path d="M5 1l1.500 6L10 11 5 9l-4 2 2.500-4z" fill="#f4f4f4" stroke="none"/><circle cx="9" cy="3" r="1.500" stroke="#f4f4f4"/></symbol>
        <symbol id="annP" viewBox="0 0 12 12"><path d="M5 1l1.500 6L10 11 5 9l-4 2 2.500-4z" fill="#e0e0e0" stroke="none"/><path d="M9 1v4M7 3h4" stroke="#ddd"/></symbol>
        <symbol id="plus" viewBox="0 0 12 12"><path d="M6 1v10M1 6h10" stroke="#e2e2e2" stroke-width="1.200"/></symbol>
        <symbol id="isol" viewBox="0 0 12 12"><path d="M1 1h4v4H1zM6 7l2.500 4h-5z" stroke="#ccc"/><circle cx="9" cy="4.500" r="2" stroke="#ccc"/></symbol>
        <symbol id="full" viewBox="0 0 12 12"><path d="M1 2h10v8H1z" stroke="#ccc"/><path d="M6 4h3v3zM6 8H3V5z" fill="#ddd" stroke="none"/></symbol>
        <symbol id="burger" viewBox="0 0 12 12"><path d="M1 2h10M1 6h10M1 10h10" stroke="#ddd" stroke-width="1.300"/></symbol>
    </g>
</svg>

<header class="d-flex">
    <div class="app-logo flex-shrink-0 mb-auto">
        <svg width="24" height="24" viewBox="0 0 24 24">
            <path d="M1.500 18.500L8 1.500h4.300L17.500 18.500h-4.600l-1.100-4.200-4.600.4L5.800 18.500z" fill="#c9302c"/>
            <path d="M8 1.500h4.300L17.500 18.500h-2L10.500 4 4 18.500H1.500z" fill="#e4524a"/>
            <path d="M8.200 11.500l2-5 1.200 5z" fill="#777"/>
            <path d="M18.500 10.500h4L20.500 13z" fill="#222"/>
        </svg>
    </div>
    <div class="flex-grow-1">
        <div class="title-row d-flex align-items-center overflow-hidden">
            <div class="d-flex align-items-center ps-1 flex-shrink-0" style="width:108px" data-icons="save saveY saveAs print . qundo v . qredo w"></div>
            <div class="ws-box d-flex align-items-center flex-shrink-0">
                <svg class="gear-ico"><use href="#gear"/></svg>Stefano
                <span class="arr ms-auto"></span>
            </div>
            <div class="d-flex align-items-center justify-content-between flex-shrink-0" style="width:41px" data-icons="phone phone2 v"></div>
            <div class="win-blue doc-title d-flex align-items-center justify-content-center flex-shrink-0 ps-2">Disegno1.dwg</div>
            <svg width="8" height="13" viewBox="0 0 8 13"><path d="M2.500 4.500v5l3-2.500z" fill="#eee"/></svg>
            <div class="search-box d-flex align-items-center flex-shrink-0">Digitare parola chiave o frase</div>
            <div class="d-flex align-items-center flex-shrink-0" style="width:29px" data-icons="binoc user"></div>
            <div class="login-name flex-shrink-0">&nbsp;Accedi</div>
            <div class="d-flex align-items-center flex-shrink-0" style="width:77px" data-icons="v . cart exch v | . help v"></div>
            <div class="win-blue flex-grow-1">
                <svg width="103" height="15" viewBox="697 0 103 15" fill="none" stroke="#e8f4fa"><path d="M724.500 7.500h6M752.500 5.500h4v4h-4zM754 5v-1.500h4.500V8H757M781.500 4.500l5 5M786.500 4.500l-5 5"/></svg>
            </div>
        </div>
        <div class="menu-row d-flex align-items-center">
            <span class="mi">File</span><span class="mi">Modifica</span><span class="mi">Visualizza</span><span class="mi">Inserisci</span><span class="mi">Formato</span><span class="mi">Strumenti</span><span class="mi">Disegna</span><span class="mi">Quotatura</span><span class="mi">Edita</span><span class="mi">Parametrico</span><span class="mi">Finestra</span><span class="mi">?</span><span class="mi">Express</span>
            <svg class="ms-auto me-1" width="28" height="10" viewBox="769 17 28 10" fill="none" stroke="#151515"><path d="M770 23.500h6" stroke-width="1.500"/><path d="M780.500 20.500h5v4h-5zM782 20v-1.500h5V23H786"/><path d="M792 19l5 5M797 19l-5 5" stroke-width="1.500"/></svg>
        </div>
    </div>
</header>

<div class="tab-row d-flex align-items-end">
    <div class="doc-tab d-flex align-items-center justify-content-between" style="width:82px">3D PUA Pisapia <b>✕</b></div>
    <div class="doc-tab d-flex align-items-center justify-content-between" style="width:93px">Tav T07 Planov new* <b>✕</b></div>
    <div class="doc-tab d-flex align-items-center justify-content-between" style="width:114px">Tav T09 profili di progetto* <b>✕</b></div>
    <div class="doc-tab on d-flex align-items-center justify-content-between" style="width:81px">Disegno1* <b>✕</b></div>
    <div class="plus-tab d-flex align-items-center justify-content-center mb-auto mt-1">+</div>
</div>

<div class="bar-row bar-top d-flex align-items-center">
    <div class="tbar"><i class="grip"></i><div class="d-flex align-items-center" style="margin-left:-2px" data-icons="new open save | print preview cut copy paste match blockEdit | undo v redo v | hand zoomRt zoomWin zoomPrev"></div>
        <div class="d-flex align-items-center ps-1" data-icons="props center sheet books markup calc broom"></div></div>
    <div class="tbar"><i class="grip"></i><div class="d-flex align-items-center" data-icons="layY layG layW layW layBack layB | lT lBulb lBulbY lLock lLockY"></div></div>
    <div class="tbar"><i class="grip"></i><div class="d-flex align-items-center" style="margin-left:-1px" data-icons="ucs | ucsW ucsP | ucsF ucsO ucsV | ucs1 ucsZ ucs3 | ucsR ucsR ucsR | ucsA"></div></div>
</div>

<div class="bar-row d-flex align-items-center">
    <div class="tbar"><i class="grip ms-1"></i><div class="d-flex" style="margin-left:-3px" data-icons="layProp"></div>
        <div class="combo" style="width:187px">
            <svg width="60" height="12" viewBox="0 0 60 12" fill="none">
                <circle cx="5.500" cy="4.500" r="2.600" fill="#f6e48a" stroke="#8a8240" stroke-width=".7"/><path d="M4.500 8h2v2h-2z" fill="#777"/>
                <circle cx="16.500" cy="5.500" r="2.200" fill="#f3d977" stroke="#66603c" stroke-width=".7"/><path d="M16.500 1v1.500M16.500 8.500V10M12 5.500h1.500M19.500 5.500H21M13.500 2.500l1 1M19.500 2.500l-1 1M13.500 8.500l1-1M19.500 8.500l-1-1" stroke="#8c7430" stroke-width=".7"/>
                <path d="M24 2h5v5h-5zM27 6h4v4h-4z" stroke="#b9b9b9"/><path d="M34 6h6v4h-6z" fill="#8d9b52"/><path d="M38 6V3h3v2" stroke="#666"/>
                <path d="M45.500 2.500h5.500v6.500h-5.500z" fill="#fff" stroke="#222"/>
            </svg><span style="margin-left:-7px">tetto</span>
            <svg class="chev" viewBox="0 0 5 4"><path d="M.5.5l2 2 2-2" fill="none" stroke="#333"/></svg>
        </div>
        <div class="d-flex" data-icons="layS layBack layProp"></div></div>
    <div class="combo" style="width:94px;margin-left:6px"><svg width="13" height="10"><path d="M2 2h7v7H2z" fill="#d01818"/></svg>Rosso<svg class="chev" viewBox="0 0 5 4"><path d="M.5.5l2 2 2-2" fill="none" stroke="#333"/></svg></div>
    <div class="combo" style="width:100px;margin-left:4px"><svg width="43" height="10"><path d="M2 5.500h38" stroke="#333" stroke-width=".8"/></svg><span>DaLayer</span><svg class="chev" viewBox="0 0 5 4"><path d="M.5.5l2 2 2-2" fill="none" stroke="#333"/></svg></div>
    <div class="combo" style="width:78px;margin-left:4px"><svg width="28" height="10"><path d="M2 5.500h22" stroke="#333" stroke-width=".8"/></svg><span>DaLayer</span><svg class="chev" viewBox="0 0 5 4"><path d="M.5.5l2 2 2-2" fill="none" stroke="#333"/></svg></div>
    <div class="combo off" style="width:74px;margin-left:3px"><span style="margin-left:5px">DaColore</span><svg class="chev" viewBox="0 0 5 4"><path d="M.5.5l2 2 2-2" fill="none" stroke="#999"/></svg></div>
    <div class="tbar" style="margin-left:3px"><i class="grip"></i><div class="d-flex align-items-center" data-icons="r1 | clip clipD clipG clipB clipR image book | xrefG importI | winds"></div></div>
</div>

<main class="work d-flex">
    <div class="dock d-flex align-items-start flex-shrink-0" style="width:35px">
        <div>
            <div class="vbar" data-grip data-icons="line xline pline poly rect arc circ cloud spl ell ellA insB mkB palB pts hatch grad bound region table txtA addSel"></div>
            <div class="vbar" data-grip data-icons="ord1 ord2 ord3 ord4 | abc hback"></div>
        </div>
        <div class="ms-auto" style="margin-right:2px">
            <div class="vbar" data-grip data-icons="erase cpy mirr offs array move rot scale strch trim ext brk1 brk2 join cham fil spl expl"></div>
            <div class="vbar" data-grip data-icons="dimB dimA pages | pageI insp"></div>
        </div>
    </div>

    <div class="canvas position-relative flex-grow-1">
        <svg width="725" height="492" viewBox="36 82 725 492">
            <defs>
                <linearGradient id="faceR" x1="0" y1="0" x2="1" y2=".3"><stop offset="0" stop-color="#434343"/><stop offset="1" stop-color="#4f4f4f"/></linearGradient>
            </defs>
            <!-- roof faces -->
            <path d="M149.300 264L420 243l-29 57-215.500 19z" fill="#595959"/>
            <path d="M420 243l12-2 142 96-183-37z" fill="#575757"/>
            <path d="M430 242l97-19 68 19-20 95z" fill="url(#faceR)"/>
            <path d="M391 298l184 38-226 64-84-60z" fill="#525252"/>
            <path d="M172.300 386L268 340l82 59-94 45z" fill="#646464"/>
            <path d="M419 244l-28 54M392 299l182 37M430 242l144 94" stroke="#666" stroke-width=".6" fill="none"/>
            <!-- edges -->
            <path d="M149.300 259.300L421.700 238.300 527 218v6l-105.300 20L149.300 265z" fill="#d8dbd9"/>
            <path d="M421.700 238.300v6" stroke="#3d3d3d"/>
            <path d="M527 218l68 19v6l-68-19z" fill="#a5a7a6"/>
            <path d="M527 218v6" stroke="#4c4c4c" stroke-width=".8"/>
            <path d="M149.700 265L175.500 319" stroke="#8b8e90" stroke-width="1.200"/>
            <path d="M594.800 243L575.800 339" stroke="#8f9496" stroke-width="1.200"/>
            <path d="M172.300 381.700L265.700 336.500 376 302h15l-12 4.500L265.700 342 172.300 387.500z" fill="#d4d8d6"/>
            <path d="M175 318.300l215.700-20v5.700L175 323.700z" fill="#d8dbd9"/>
            <path d="M340 309l50-4.500" stroke="#666" stroke-width=".5"/>
            <path d="M172.300 387l3-1L256 443v5.500z" fill="#7e8081"/>
            <path d="M256 443l93-44.500L575 336.500v5.700L349 404l-93 44.500z" fill="#d4d8d6"/>
            <!-- cursor -->
            <g fill="none" stroke-width="1">
                <path d="M667.500 367v33" stroke="#5d5ab8"/>
                <path d="M656 394.500l35.500-16.500" stroke="#9c5d6c"/>
                <path d="M659 382l26 22" stroke="#4ca083"/>
                <path d="M664.500 386.500h5v5h-5z" fill="#212830" stroke="#f1f1f1"/>
            </g>
            <!-- ucs icon -->
            <g fill="none" stroke-width="3" stroke-linecap="round">
                <path d="M67 541v-22" stroke="#3f76c9"/>
                <path d="M69 544l16 13" stroke="#4b9a58"/>
                <path d="M67.500 542l23-11" stroke="#c65a5c"/>
                <path d="M67.500 541.300l23-11" stroke="#e08c8a" stroke-width=".8"/>
            </g>
            <g font-family="Liberation Sans, sans-serif" font-size="10.500">
                <text x="66" y="516.500" fill="#2060b0" textLength="8">Z</text>
                <text x="89.500" y="527.500" fill="#a03040" textLength="8">X</text>
                <text x="84" y="556" fill="#228a38" textLength="7">Y</text>
            </g>
            <!-- view cube -->
            <ellipse cx="746.500" cy="99" rx="11.500" ry="6" fill="none" stroke="#6c737b" stroke-width="2" stroke-dasharray="14 2"/>
            <path d="M740 92l7-2.500 6 3-1 8-6.500 3-5-4z" fill="#a2a6a9"/><path d="M740 92l6 3 7-2.500-6-3z" fill="#bfc2c4"/><path d="M746 95l-.5 8.500 6.500-3 1-8z" fill="#85898d"/>
            <rect x="740" y="112.500" width="12" height="4.500" rx="2" fill="#a3a9b3"/>
        </svg>
        <div class="vp-label position-absolute">[−][Vista personalizzata][Realistico]</div>
        <div class="prop-bar position-absolute d-flex flex-column align-items-center">
            <svg width="13" height="36" viewBox="748 139 13 36" fill="none" stroke="#ddd"><path d="M752 143.500l4.500 4.500M756.500 143.500L752 148"/><path d="M752.500 155v5M754 157.500h3M755.500 155.500l2 2-2 2"/><circle cx="754.500" cy="169.500" r="2.200" stroke-dasharray="1.100 .7" stroke-width="1.500"/></svg>
            <div class="vtxt mt-auto">PROPRIETÀ</div>
            <svg width="13" height="13" fill="none" stroke="#ccc" stroke-width=".9"><path d="M2.500 1.500h8v9h-8zM4.500 3.500h2v2h-2zM8 3v3M4 8.500h5"/></svg>
        </div>
    </div>

    <div class="dock d-flex align-items-start flex-shrink-0" style="width:37px">
        <div class="ms-auto">
            <div class="vbar tight" data-grip data-icons="union subt inter | extF movF offF delF rotF slice cpF colF | filE chaE impr colF | clean brush sep3 shell chk"></div>
            <div class="vbar tight" data-grip data-icons="vs | sphW sphL sphB sphO | vsM"></div>
        </div>
        <div style="margin:0 2px 0 2px">
            <div class="vbar" data-grip data-icons="psol box wedge cone sph cyl torus pyr helix plane | extr ppull sweep revo loft | sect horn flat flat2 | orb orb2 lshape mesh | redL yelC mag"></div>
        </div>
    </div>
</main>

<section class="cmd d-flex">
    <div class="cmd-side flex-shrink-0">
        <svg width="14" height="45" viewBox="0 576 14 45" fill="none"><path d="M2 579.500h10M2 581.500h10" stroke="#a5a5a5" stroke-dasharray="1 1"/><path d="M4.500 587l5 5M9.500 587l-5 5" stroke="#f2f2f2" stroke-width="1.300"/><path d="M6 602l5 5" stroke="#eee" stroke-width="1.800"/><path d="M3 600c0 4 5 4 4 0M4.800 599v2" stroke="#eee" stroke-width="1.300"/></svg>
    </div>
    <div class="flex-grow-1">
        <div class="cmd-log">Comando:
Comando: "Annullato"
Comando:</div>
        <div class="cmd-in d-flex align-items-center">
            <svg width="23" height="12" fill="none"><path d="M3.500 2.500h9v7h-9z" fill="#d8dce0" stroke="#999"/><path d="M5 4l2 2-2 2M8 8.500h3" stroke="#444"/><path d="M14.500 5h4l-2 2.500z" fill="#666"/></svg>Digitare un comando
        </div>
    </div>
</section>

<footer class="status d-flex">
    <div class="lay-tab on d-flex align-items-center justify-content-center" style="margin-left:7px">Modello</div>
    <div class="lay-tab d-flex align-items-center justify-content-center">Layout1</div>
    <div class="lay-tab d-flex align-items-center justify-content-center">Layout2</div>
    <div class="lay-tab d-flex align-items-center justify-content-center" style="width:18px;font-size:10px;color:#ddd">+</div>
    <div class="st-group st-model d-flex align-items-center justify-content-center ms-auto">MODELLO</div>
    <div class="st-group d-flex align-items-center" style="width:42px" data-icons="grid snap v"></div>
    <div class="st-group d-flex align-items-center" style="width:64px" data-icons="*ortho polar v iso v"></div>
    <div class="st-group d-flex align-items-center" style="width:42px" data-icons="*otrack *osnap v"></div>
    <div class="st-group d-flex align-items-center" style="width:68px"><div class="d-flex align-items-center" data-icons="*annS annP ann"></div><span style="margin-left:1px">1:1</span><span class="arr"></span></div>
    <div class="st-group d-flex align-items-center" style="width:25px" data-icons="gear v"></div>
    <div class="st-group d-flex align-items-center" style="width:16px" data-icons="plus"></div>
    <div class="st-group d-flex align-items-center" style="width:17px" data-icons="isol"></div>
    <div class="st-group d-flex align-items-center" style="width:31px" data-icons="full burger"></div>
</footer>

<script src="https://cdn.jsdelivr.net/npm/bootstrap@5.3.0/dist/js/bootstrap.bundle.min.js"></script>
<script>
    // fill every toolbar from its data-icons list:  | separator, v / w drop arrows, . small gap, * active
    document.querySelectorAll("[data-icons]").forEach(function (bar) {
        let html = bar.hasAttribute("data-grip") ? '<i class="grip"></i>' : "";
        bar.dataset.icons.split(" ").forEach(function (name) {
            if (name === "|") html += '<i class="bsep"></i>';
            else if (name === "v") html += '<i class="arr"></i>';
            else if (name === "w") html += '<i class="arr off"></i>';
            else if (name === ".") html += '<i style="width:2px"></i>';
            else if (name[0] === "*") html += '<span class="cell hot"><svg><use href="#' + name.slice(1) + '"/></svg></span>';
            else html += '<span class="cell"><svg><use href="#' + name + '"/></svg></span>';
        });
        bar.innerHTML = html;
    });
</script>
</body>
</html>
